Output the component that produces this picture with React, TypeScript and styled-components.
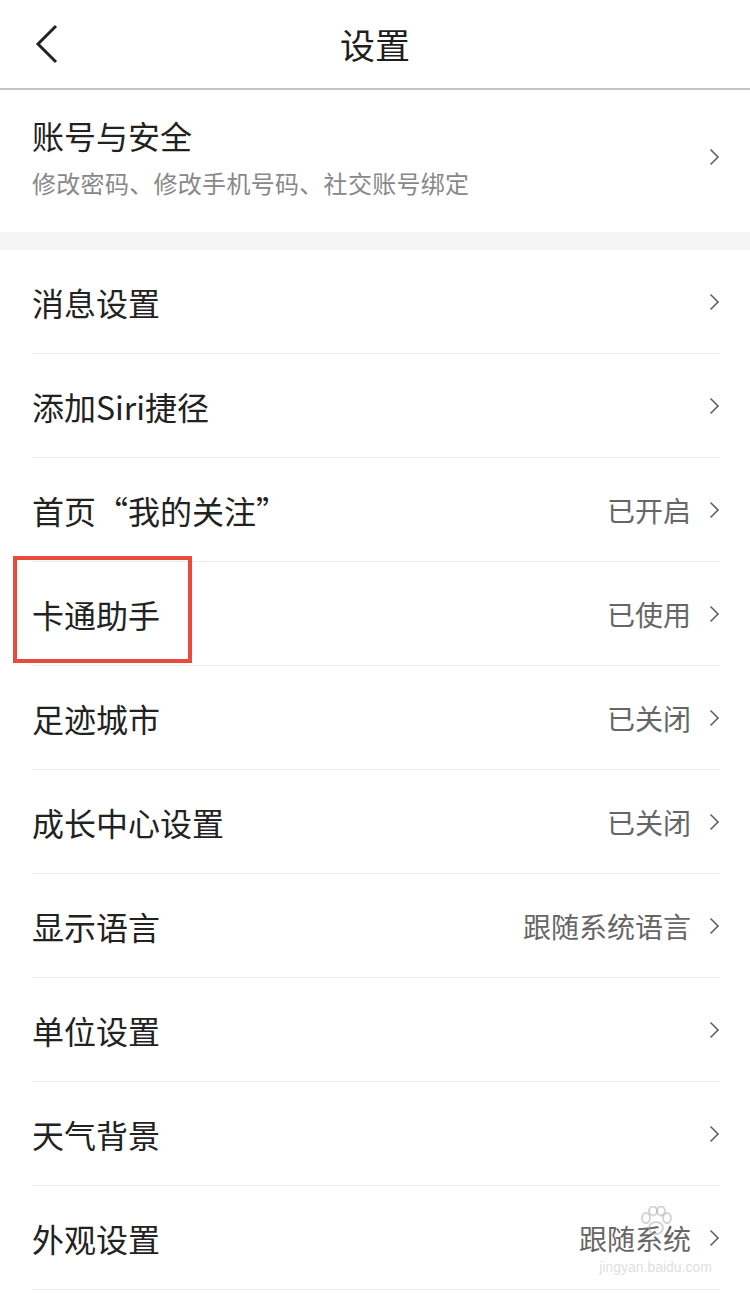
import React from "react";
import styled, { createGlobalStyle } from "styled-components";

type TRow = {
  title: string;
  value?: string;
  marked?: boolean;
};

const rows: TRow[] = [
  { title: "消息设置" },
  { title: "添加Siri捷径" },
  { title: "首页“我的关注”", value: "已开启" },
  { title: "卡通助手", value: "已使用", marked: true },
  { title: "足迹城市", value: "已关闭" },
  { title: "成长中心设置", value: "已关闭" },
  { title: "显示语言", value: "跟随系统语言" },
  { title: "单位设置" },
  { title: "天气背景" },
  { title: "外观设置", value: "跟随系统" },
];

const GlobalStyle = createGlobalStyle`
  body {
    margin: 0;
    background: #ffffff;
    font-family: "Noto Sans CJK SC", "Noto Sans", sans-serif;
    color: #222;
  }
`;

const Page = styled.div`
  width: 750px;
  height: 1294px;
  overflow: hidden;
  position: relative;
  background: #fff;
`;

const Header = styled.header`
  height: 88px;
  display: flex;
  align-items: center;
  justify-content: center;
  position: relative;
  border-bottom: 2px solid #c4c4c4;
`;

const Back = styled.button`
  position: absolute;
  left: 34px;
  top: 24px;
  width: 28px;
  height: 40px;
  background: none;
  border: none;
  padding: 0;
  display: flex;
`;

const Title = styled.h1`
  margin: 0;
  font-size: 35px;
  font-weight: 400;
  color: #1e1e1e;
  line-height: 44px;
`;

const Account = styled.div`
  display: flex;
  align-items: center;
  padding: 25px 30px 33px 32px;
`;

const AccountText = styled.div`
  flex: 1;
  display: flex;
  flex-direction: column;
  gap: 12px;
`;

const AccountTitle = styled.p`
  margin: 0;
  font-size: 32px;
  line-height: 40px;
  color: #222;
`;

const AccountSub = styled.p`
  margin: 0;
  font-size: 24px;
  letter-spacing: 0.3px;
  line-height: 32px;
  color: #888;
`;

const Gap = styled.div`
  height: 18px;
  background: #f5f5f5;
`;

const List = styled.ul`
  list-style: none;
  margin: 0;
  padding: 0;
`;

const Row = styled.li`
  position: relative;
  padding-left: 32px;
`;

const RowInner = styled.div`
  height: 103px;
  margin-right: 30px;
  display: flex;
  align-items: center;
  border-bottom: 1px solid #ebebeb;
`;

const RowTitle = styled.span`
  flex: 1;
  font-size: 32px;
  color: #222;
`;

const Value = styled.span`
  font-size: 28px;
  color: #666;
  margin-right: 18px;
`;

const Highlight = styled.div`
  position: absolute;
  left: 13px;
  top: -6px;
  width: 179px;
  height: 107px;
  box-sizing: border-box;
  border: 4px solid #e84a3b;
  pointer-events: none;
`;

const Watermark = styled.div`
  position: absolute;
  right: 38px;
  bottom: 18px;
  display: flex;
  flex-direction: column;
  align-items: center;
  color: rgba(170, 170, 170, 0.4);
  font-family: "Liberation Sans", sans-serif;
  pointer-events: none;
`;

const MarkBottom = styled.span`
  font-size: 14px;
  line-height: 18px;
`;

const Paw = styled.svg`
  position: absolute;
  top: -52px;
  left: 50%;
  margin-left: -18px;
`;

const Chevron = () => (
  <svg width="11" height="18" viewBox="0 0 11 18">
    <path d="M1.5 1.5 L9 9 L1.5 16.5" fill="none" stroke="#666" strokeWidth="1.7" />
  </svg>
);

const App = () => {
  return (
    <Page>
      <GlobalStyle />
      <Header>
        <Back>
          <svg width="28" height="40" viewBox="0 0 28 40">
            <path d="M22 2 L4 20 L22 38" fill="none" stroke="#222" strokeWidth="3" />
          </svg>
        </Back>
        <Title>设置</Title>
      </Header>

      <Account>
        <AccountText>
          <AccountTitle>账号与安全</AccountTitle>
          <AccountSub>修改密码、修改手机号码、社交账号绑定</AccountSub>
        </AccountText>
        <Chevron />
      </Account>
      <Gap />

      <List>
        {rows.map((row) => (
          <Row key={row.title}>
            <RowInner>
              <RowTitle>{row.title}</RowTitle>
              {row.value && <Value>{row.value}</Value>}
              <Chevron />
            </RowInner>
            {row.marked && <Highlight />}
          </Row>
        ))}
      </List>

      <Watermark>
        <Paw width="36" height="30" viewBox="0 0 36 30">
          <g fill="none" stroke="rgba(170,170,170,0.5)" strokeWidth="2">
            <ellipse cx="8" cy="12" rx="4" ry="5" />
            <ellipse cx="15" cy="5" rx="4" ry="4.5" />
            <ellipse cx="23" cy="5" rx="4" ry="4.5" />
            <ellipse cx="29" cy="12" rx="4" ry="5" />
            <ellipse cx="18" cy="22" rx="7" ry="6" />
          </g>
        </Paw>
        <MarkBottom>jingyan.baidu.com</MarkBottom>
      </Watermark>
    </Page>
  );
};

export default App;
